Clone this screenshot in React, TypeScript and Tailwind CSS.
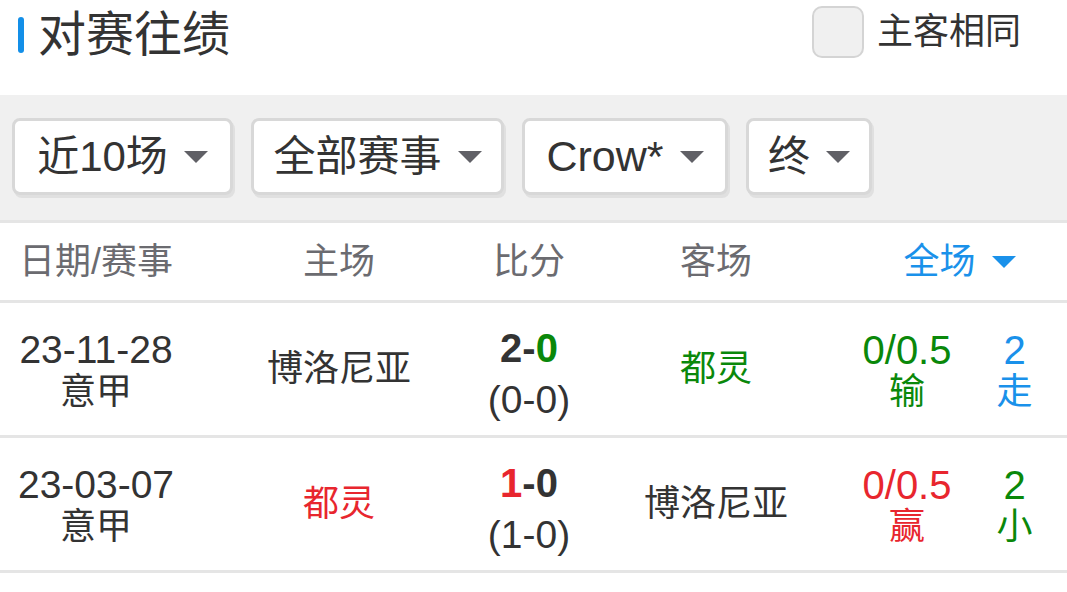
import React from "react";

const font = { fontFamily: '"Liberation Sans", "Noto Sans CJK SC", sans-serif' };

function Tri({ className = "" }: { className?: string }) {
  return (
    <svg width="24" height="12" viewBox="0 0 24 12" className={className}>
      <polygon points="0,0 24,0 12,12" fill="currentColor" />
    </svg>
  );
}

function FilterBtn({ label, w, latin }: { label: React.ReactNode; w: string; latin?: boolean }) {
  return (
    <div
      className={`${w} h-[77px] flex items-center justify-center gap-[16px] bg-white rounded-[8px] border-[3px] border-[#d8d8d8] shadow-[2px_3px_0_#e0e0e0] text-[42px] text-[#333]`}
    >
      <span className={latin ? "text-[43px]" : ""}>{label}</span>
      <Tri className="text-[#606066]" />
    </div>
  );
}

const G = "text-[#0a880a]";
const R = "text-[#e8262e]";
const B = "text-[#1a91ea]";
const D = "text-[#333333]";

type Row = {
  date: string;
  home: string;
  homeC: string;
  s1: string;
  s1c: string;
  s2: string;
  s2c: string;
  half: string;
  away: string;
  awayC: string;
  hc: string;
  hcRes: string;
  hcC: string;
  tot: string;
  totRes: string;
  totC: string;
};

const rows: Row[] = [
  {
    date: "23-11-28",
    home: "博洛尼亚",
    homeC: D,
    s1: "2",
    s1c: D,
    s2: "0",
    s2c: G,
    half: "(0-0)",
    away: "都灵",
    awayC: G,
    hc: "0/0.5",
    hcRes: "输",
    hcC: G,
    tot: "2",
    totRes: "走",
    totC: B,
  },
  {
    date: "23-03-07",
    home: "都灵",
    homeC: R,
    s1: "1",
    s1c: R,
    s2: "0",
    s2c: D,
    half: "(1-0)",
    away: "博洛尼亚",
    awayC: D,
    hc: "0/0.5",
    hcRes: "赢",
    hcC: R,
    tot: "2",
    totRes: "小",
    totC: G,
  },
];

export default function App() {
  return (
    <div className="w-[1067px] h-[592px] bg-white overflow-hidden" style={font}>
      {/* title bar */}
      <div className="h-[95px] flex items-start justify-between">
        <div className="flex items-center pl-[18px] pt-[10px]">
          <div className="w-[6px] h-[36px] rounded-full bg-[#138fe8]" />
          <span className="ml-[14px] text-[48px] leading-[50px] text-[#333]">对赛往绩</span>
        </div>
        <div className="flex items-center pt-[5px] pr-[46px]">
          <div className="w-[52px] h-[52px] rounded-[10px] border-[2px] border-[#d4d4d4] bg-[#f0f0f0]" />
          <span className="ml-[13px] text-[36px] text-[#333]">主客相同</span>
        </div>
      </div>

      {/* filters */}
      <div className="h-[125px] bg-[#f0f0f0] flex items-start pt-[23px] pl-[12px] gap-[18px]">
        <FilterBtn label="近10场" w="w-[221px]" />
        <FilterBtn label="全部赛事" w="w-[253px]" />
        <FilterBtn label="Crow*" w="w-[206px]" latin />
        <FilterBtn label="终" w="w-[126px]" />
      </div>

      {/* table header */}
      <div className="h-[83px] border-t-[3px] border-b-[3px] border-[#e5e5e5] flex items-center text-[36px] text-[#6b6b70]">
        <div className="w-[192px] flex justify-center">日期/赛事</div>
        <div className="w-[294px] flex justify-center">主场</div>
        <div className="w-[86px] flex justify-center">比分</div>
        <div className="w-[288px] flex justify-center">客场</div>
        <div className="w-[199px] flex justify-center items-center gap-[16px] text-[#1a91ea]">
          <span>全场</span>
          <Tri />
        </div>
      </div>

      {rows.map((r, i) => (
        <div
          key={i}
          className="h-[135px] border-b-[3px] border-[#e5e5e5] flex items-center text-[36px] leading-[42px]"
        >
          <div className={`w-[192px] flex flex-col items-center pt-[3px] ${D}`}>
            <span className="text-[39px]">{r.date}</span>
            <span>意甲</span>
          </div>
          <div className={`w-[294px] flex justify-center ${r.homeC}`}>{r.home}</div>
          <div className="w-[86px] flex flex-col items-center whitespace-nowrap pt-[10px]">
            <span className="font-bold text-[40px]">
              <span className={r.s1c}>{r.s1}</span>
              <span className={D}>-</span>
              <span className={r.s2c}>{r.s2}</span>
            </span>
            <span className={`${D} mt-[10px] text-[39px]`}>{r.half}</span>
          </div>
          <div className={`w-[288px] flex justify-center ${r.awayC}`}>{r.away}</div>
          <div className={`w-[94px] flex flex-col items-center pt-[3px] ${r.hcC}`}>
            <span className="text-[40px]">{r.hc}</span>
            <span>{r.hcRes}</span>
          </div>
          <div className={`w-[113px] pl-[8px] flex flex-col items-center pt-[3px] ${r.totC}`}>
            <span className="text-[40px]">{r.tot}</span>
            <span>{r.totRes}</span>
          </div>
        </div>
      ))}
    </div>
  );
}
